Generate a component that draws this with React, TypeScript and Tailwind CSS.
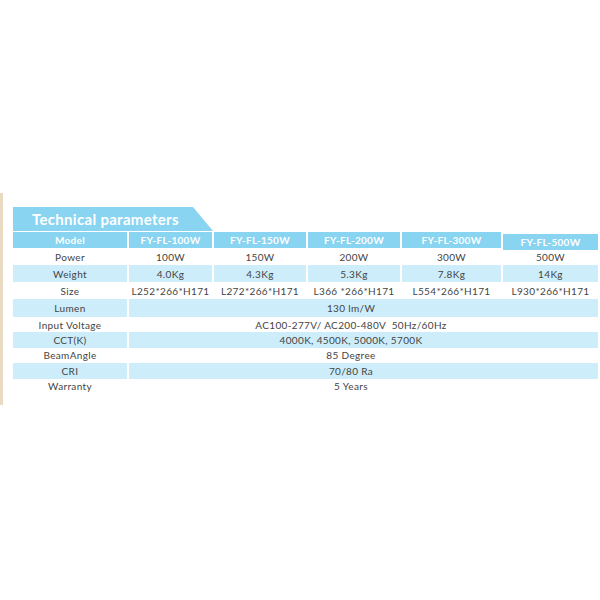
const cols = "grid grid-cols-[114px_83px_92px_92px_99px_95px] gap-x-[2px]";

const models = ["FY-FL-100W", "FY-FL-150W", "FY-FL-200W", "FY-FL-300W", "FY-FL-500W"];

type Row = { label: string; values: string[]; h: string; blue?: boolean };

const rows: Row[] = [
  { label: "Power", values: ["100W", "150W", "200W", "300W", "500W"], h: "h-[17px]" },
  { label: "Weight", values: ["4.0Kg", "4.3Kg", "5.3Kg", "7.8Kg", "14Kg"], h: "h-[17px]", blue: true },
  {
    label: "Size",
    values: ["L252*266*H171", "L272*266*H171", "L366 *266*H171", "L554*266*H171", "L930*266*H171"],
    h: "h-[17px]",
  },
  { label: "Lumen", values: ["130 lm/W"], h: "h-[18px]", blue: true },
  { label: "Input Voltage", values: ["AC100-277V/ AC200-480V  50Hz/60Hz"], h: "h-[15px]" },
  { label: "CCT(K)", values: ["4000K, 4500K, 5000K, 5700K"], h: "h-[15px]", blue: true },
  { label: "BeamAngle", values: ["85 Degree"], h: "h-[16px]" },
  { label: "CRI", values: ["70/80 Ra"], h: "h-[15px]", blue: true },
  { label: "Warranty", values: ["5 Years"], h: "h-[16px]" },
];

export default function App() {
  return (
    <div
      className="h-[600px] w-[600px] bg-white pt-[193px] text-[#444444]"
      style={{ fontFamily: "Lato, 'Open Sans', sans-serif" }}
    >
      <div className="flex">
        <div className="h-[212px] w-[3px] bg-[#e8dac3]" />
        <div className="ml-[10px] pt-[14px]">
          <div
            className="flex h-[24px] w-[200px] items-center bg-[#88d4f1] pl-[19px] text-[15px] font-bold tracking-[0.3px] text-white"
            style={{ clipPath: "polygon(0 0, 180px 0, 200px 100%, 0 100%)" }}
          >
            Technical parameters
          </div>

          <div className={`${cols} mt-[1px] h-[16px] text-[10px] font-bold tracking-[0.3px] text-white`}>
            <div className="flex items-center justify-center bg-[#88d4f1]">Model</div>
            {models.map((m, i) => (
              <div
                key={m}
                className={`flex items-center justify-center bg-[#88d4f1] ${i === 4 ? "translate-y-[2px]" : ""}`}
              >
                {m}
              </div>
            ))}
          </div>

          {rows.map((r) => (
            <div key={r.label} className={`${cols} ${r.h} text-[10px] tracking-[0.35px]`}>
              <div className={`flex items-center justify-center pt-[1px] ${r.blue ? "bg-[#cdedfa]" : ""}`}>
                {r.label}
              </div>
              {r.values.length === 1 ? (
                <div
                  className={`col-span-5 flex items-center justify-center whitespace-pre pr-[25px] pt-[1px] ${r.blue ? "bg-[#cdedfa]" : ""}`}
                >
                  {r.values[0]}
                </div>
              ) : (
                r.values.map((v, i) => (
                  <div
                    key={i}
                    className={`flex items-center justify-center whitespace-pre pt-[1px] ${r.blue ? "bg-[#cdedfa]" : ""}`}
                  >
                    {v}
                  </div>
                ))
              )}
            </div>
          ))}
        </div>
      </div>
    </div>
  );
}
